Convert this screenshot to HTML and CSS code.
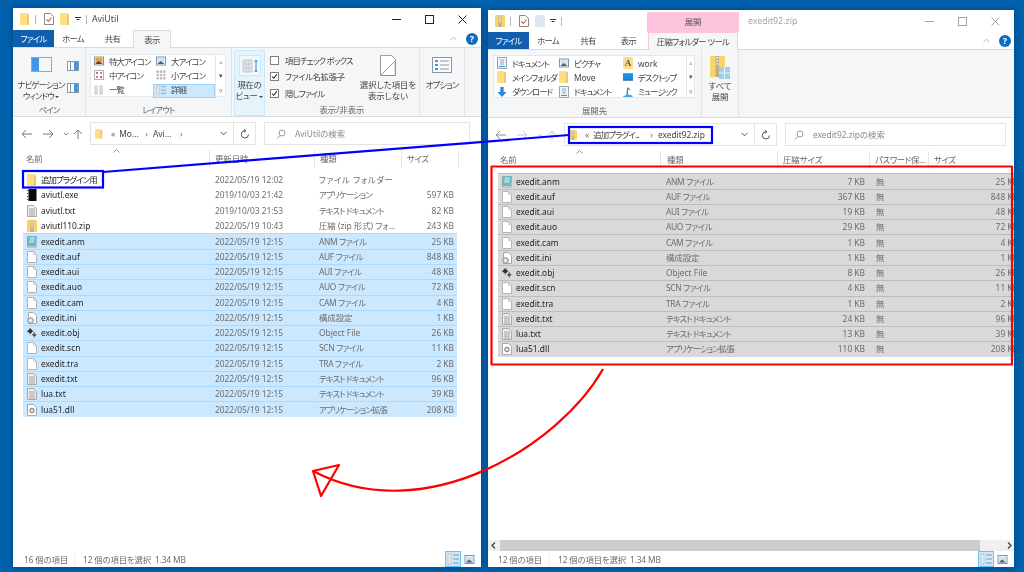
FILE: index.html
```html
<!DOCTYPE html>
<html lang="ja">
<head>
  <meta charset="utf-8">
  <title>AviUtil / exedit92.zip</title>
  <link rel="stylesheet" href="styles.css">
</head>
<body>

<svg class="Defs" width="0" height="0">
  <symbol id="folder" viewBox="0 0 10 12"><path d="M1 0h6l2 1.5V11a1 1 0 0 1-1 1H1a1 1 0 0 1-1-1V1a1 1 0 0 1 1-1z" fill="#fedd85"/><path d="M7 1v11h1a1 1 0 0 0 1-1V2z" fill="#f0c860"/></symbol>
  <symbol id="zip" viewBox="0 0 10 12"><rect width="10" height="12" rx="1" fill="#fbd36b"/><rect x="3.500" width="3" height="12" fill="#b9b08a"/><path d="M4 1h2M4 3h2M4 5h2M4 7h2" stroke="#fff" stroke-width=".8"/></symbol>
  <symbol id="file" viewBox="0 0 10 12"><path d="M.5.500h6l3 3v8H.5z" fill="#fff" stroke="#b4b4b4"/><path d="M6.500.500v3h3" fill="none" stroke="#ccc"/></symbol>
  <symbol id="txt" viewBox="0 0 10 12"><path d="M.5.500h6l3 3v8H.5z" fill="#efefef" stroke="#a8a8a8"/><path d="M2 4h6M2 6h6M2 8h6M2 10h6" stroke="#a0a0a0"/></symbol>
  <symbol id="exe" viewBox="0 0 10 12"><rect width="10" height="12" fill="#fff"/><rect x="1.500" width="8" height="12" fill="#0a0a0a"/><path d="M.5 1v1M.5 4v1M.5 7v1M.5 10v1" stroke="#555"/></symbol>
  <symbol id="anm" viewBox="0 0 10 12"><path d="M.5.500h8.500v10.500H.5z" fill="#fff" stroke="#999"/><path d="M1.500 0H10L8.500 10H0z" fill="#6fb6c4"/><path d="M3 1h5L7 7H2z" fill="#a5d6de"/></symbol>
  <symbol id="ini" viewBox="0 0 10 12"><path d="M1.500.500h5l3 3v8h-8z" fill="#fff" stroke="#aaa"/><circle cx="3.500" cy="8.500" r="2.800" fill="#ddd" stroke="#888"/><circle cx="3.500" cy="8.500" r="1" fill="#fff"/></symbol>
  <symbol id="obj" viewBox="0 0 11 11"><circle cx="3.500" cy="3.500" r="2.300" fill="#333"/><path d="M3.500 0v7M0 3.500h7" stroke="#333"/><circle cx="8" cy="7.500" r="1.700" fill="#555"/><path d="M8 4.500v6M5.500 7.500h5" stroke="#555"/></symbol>
  <symbol id="dll" viewBox="0 0 10 12"><path d="M.5.500h6l3 3v8H.5z" fill="#fff" stroke="#aaa"/><circle cx="5" cy="6.500" r="2.300" fill="#ccc" stroke="#7f7f7f"/><circle cx="5" cy="6.500" r=".8" fill="#fff"/></symbol>
  <symbol id="doc" viewBox="0 0 10 12"><path d="M.5.500h9v11h-9z" fill="#f3f3f3" stroke="#9aa3ad"/><path d="M3 2h4v6H3z" fill="#b9d3ea"/><path d="M2 9.500h6" stroke="#3f8fd6"/></symbol>
  <symbol id="props" viewBox="0 0 10 12"><path d="M.5.500h6l3 3v8h-9z" fill="#fff" stroke="#8a8a8a"/><path d="M2.500 6.500l2 2 3-4" fill="none" stroke="#e0533a" stroke-width="1.100"/></symbol>
  <symbol id="pict" viewBox="0 0 10 9"><rect x=".5" y=".5" width="9" height="8" fill="#fff" stroke="#8793a0"/><rect x="1.500" y="1.500" width="7" height="6" fill="#cfe3f4"/><path d="M1.500 7.500l3-3 4 3z" fill="#44617c"/></symbol>
  <symbol id="pictx" viewBox="0 0 10 9"><rect x=".5" y=".5" width="9" height="8" fill="#fff" stroke="#8793a0"/><rect x="1.500" y="1.500" width="7" height="6" fill="#e7a03c"/><path d="M1.500 7.500l3-3 4 3z" fill="#4a3f87"/></symbol>
  <symbol id="mid" viewBox="0 0 10 10"><rect x=".5" y=".5" width="9" height="9" fill="#fff" stroke="#b3b3b3"/><path d="M2 2h2v2H2z" fill="#e0654a"/><path d="M6 2h2v2H6z" fill="#999"/><path d="M2 6h2v2H2z" fill="#999"/><path d="M6 6h2v2H6z" fill="#e0654a"/></symbol>
  <symbol id="small" viewBox="0 0 12 12"><path d="M1 1h2v2H1zM5 1h2v2H5zM9 1h2v2H9zM1 5h2v2H1zM5 5h2v2H5zM9 5h2v2H9zM1 9h2v2H1zM5 9h2v2H5zM9 9h2v2H9z" fill="#e3a89d" stroke="#aaa" stroke-width=".6"/></symbol>
  <symbol id="lst" viewBox="0 0 12 12"><path d="M1 1h3v3H1zM1 5h3v3H1zM1 9h3v2H1z" fill="#eee" stroke="#b5b5b5" stroke-width=".7"/><path d="M7 1h3v3H7zM7 5h3v3H7zM7 9h3v2H7z" fill="#eee" stroke="#b5b5b5" stroke-width=".7"/></symbol>
  <symbol id="details" viewBox="0 0 12 12"><path d="M1 1h3v10H1z" fill="#eee" stroke="#b5b5b5" stroke-width=".7"/><path d="M6 2h6M6 6h6M6 10h6" stroke="#8a99a6"/></symbol>
  <symbol id="pane" viewBox="0 0 12 10"><rect x=".5" y=".5" width="11" height="9" fill="#fff" stroke="#8a97a3"/><rect x="7" y="1" width="4" height="8" fill="#3f97e6"/><path d="M3.500 1v8" stroke="#8a97a3"/></symbol>
  <symbol id="arrowdown" viewBox="0 0 12 12"><path d="M4 0h4v6h3.500L6 12 .5 6H4z" fill="#2f86d6"/></symbol>
  <symbol id="desk" viewBox="0 0 12 9"><rect width="12" height="7" fill="#1a8fe3"/><rect y="7" width="12" height="2" fill="#2a6aa8"/></symbol>
  <symbol id="note" viewBox="0 0 12 12"><path d="M5 0l4 3-1 1-2-1v7c0 1.500-2.500 2-4 2h-2c1-1 2-2 4-2z" fill="#2f8fdc"/><path d="M7 9c2 0 4 1 5 3H3z" fill="#4aa8e8"/></symbol>
  <symbol id="chk" viewBox="0 0 9 9"><path d="M1.500 4.500l2 2.200 4-5" fill="none" stroke="#222" stroke-width="1.300"/></symbol>
</svg>

<main class="Desktop">

  <!-- 左のウィンドウ -->
  <section class="Win WinLeft">
    <header class="TitleBar">
      <svg class="Qa"><use href="#folder"/></svg>
      <i class="QaSep"></i>
      <svg class="Qa QaProps"><use href="#props"/></svg>
      <svg class="Qa QaNext"><use href="#folder"/></svg>
      <i class="QaDrop"></i>
      <i class="QaSep"></i>
      <span class="Title">AviUtil</span>
      <div class="WinCtrl">
        <svg viewBox="0 0 9 9"><path d="M0 4.500h9"/></svg>
        <svg viewBox="0 0 9 9"><rect x=".5" y=".5" width="8" height="8"/></svg>
        <svg viewBox="0 0 9 9"><path d="M.5.500l8 8M8.500.500l-8 8"/></svg>
      </div>
    </header>

    <nav class="Tabs">
      <span class="Tab TabFile">ファイル</span>
      <span class="Tab T38">ホーム</span>
      <span class="Tab T41">共有</span>
      <span class="Tab T38 TabOn">表示</span>
      <span class="RibbonEnd"><svg class="Chev" viewBox="0 0 8 5"><path d="M.5 4.500L4 1l3.500 3.500"/></svg><b class="Help">?</b></span>
    </nav>

    <div class="Ribbon">
      <div class="Group GPane">
        <div class="GroupBody">
          <div class="Big BigNav">
            <svg class="IconNav" viewBox="0 0 21 15"><rect x=".5" y=".5" width="20" height="14" fill="#f4f6f8" stroke="#9aa7b3"/><rect x="1" y="1" width="7" height="13" fill="#3f97e6"/></svg>
            <span>ナビゲーション<br>ウィンドウ <em class="Drop"></em></span>
          </div>
          <div class="PaneSmall">
            <svg><use href="#pane"/></svg>
            <svg><use href="#pane"/></svg>
          </div>
        </div>
        <div class="GroupLabel Kana">ペイン</div>
      </div>

      <div class="Group GLayout">
        <div class="GroupBody">
          <div class="Gallery GalleryLeft">
            <span class="GItem"><svg><use href="#pictx"/></svg>特大アイコン</span>
            <span class="GItem"><svg><use href="#pict"/></svg>大アイコン</span>
            <span class="GScroll">▴</span>
            <span class="GItem"><svg><use href="#mid"/></svg>中アイコン</span>
            <span class="GItem"><svg><use href="#small"/></svg>小アイコン</span>
            <span class="GScroll GDark">▾</span>
            <span class="GItem"><svg><use href="#lst"/></svg>一覧</span>
            <span class="GItem GItemOn"><svg><use href="#details"/></svg>詳細</span>
            <span class="GScroll GDark">▿</span>
          </div>
        </div>
        <div class="GroupLabel Kana">レイアウト</div>
      </div>

      <div class="Group GView">
        <div class="CurView">
          <span class="CurViewBtn"><svg viewBox="0 0 16 14" width="16" height="14"><path d="M1 1h9v12H1z" fill="#e4e8ec" stroke="#c3c9cf"/><path d="M4 1v12M7 1v12M1 5h9M1 9h9" stroke="#c3c9cf"/><path d="M14 1v12M12.500 2.500L14 1l1.500 1.500M12.500 11.500L14 13l1.500-1.500" fill="none" stroke="#2f86d6"/></svg></span>
          <span>現在の<br>ビュー <em class="Drop"></em></span>
        </div>
        <div class="ViewRest">
          <div class="GroupBody">
            <div class="Checks">
              <label class="Check Kana"><i class="Box"></i>項目チェック ボックス</label>
              <label class="Check KanaMix"><i class="Box"><svg><use href="#chk"/></svg></i>ファイル名拡張子</label>
              <label class="Check Kana"><i class="Box"><svg><use href="#chk"/></svg></i>隠しファイル</label>
            </div>
            <div class="Big BigHide">
              <svg class="IconHide" viewBox="0 0 16 21"><path d="M.5.500h11l4 4v16H.5z" fill="#fff" stroke="#9c9c9c"/><path d="M1 20L15 6" stroke="#9c9c9c"/><path d="M15 6v14.500H2" fill="none" stroke="#3f97e6" stroke-dasharray="1 1"/></svg>
              <span>選択した項目を<br>表示しない</span>
            </div>
          </div>
          <div class="GroupLabel">表示/非表示</div>
        </div>
      </div>

      <div class="Group GOption">
        <div class="GroupBody">
          <div class="Big BigOpt">
            <svg class="IconOpt" viewBox="0 0 20 16"><rect x=".5" y=".5" width="19" height="15" fill="#fbfbfb" stroke="#8a97a3"/><path d="M8 4h9M8 8h9M8 12h9" stroke="#8a97a3"/><path d="M3 4h3M3 8h3M3 12h3" stroke="#3f97e6" stroke-width="2"/></svg>
            <span class="Kana">オプション</span>
          </div>
        </div>
      </div>
    </div>

    <div class="AddrRow">
      <svg class="NavIcons" width="62" height="12" viewBox="0 0 62 12"><path d="M2 6h10M6 2L2 6l4 4M23 6h10M29 2l4 4-4 4M44 5l2 2 2-2M58 11V2M54 6l4-4 4 4" fill="none" stroke="#7d7d7d"/></svg>
      <div class="Addr">
        <svg class="AddrIcon"><use href="#folder"/></svg>
        <span class="Crumb CrumbFirst">«</span>
        <span class="Crumb CrumbName L1">Mo...</span>
        <span class="Crumb">›</span>
        <span class="Crumb CrumbName L2">Avi...</span>
        <span class="Crumb">›</span>
        <svg class="AddrChev" viewBox="0 0 8 5"><path d="M.5.500L4 4l3.500-3.500"/></svg>
        <span class="AddrReload"><svg viewBox="0 0 10 10" width="10" height="10"><path d="M8.500 5.500A3.600 3.600 0 1 1 5 1.800" fill="none" stroke="#555"/><path d="M4 .3l2 1.500L4 3.300" fill="none" stroke="#555"/></svg></span>
      </div>
      <div class="Search">
        <svg viewBox="0 0 10 10" width="10" height="10"><circle cx="6" cy="4" r="3" fill="none" stroke="#999"/><path d="M4 6.500L1 9.500" stroke="#999"/></svg>
        <span>AviUtilの検索</span>
      </div>
    </div>

    <div class="Head HeadLeft">
      <span class="HCell">名前</span>
      <span class="HCell">更新日時</span>
      <span class="HCell">種類</span>
      <span class="HCell KanaMix">サイズ</span>
      <svg class="Sort" viewBox="0 0 7 4"><path d="M.5 3.500L3.500.5l3 3"/></svg>
    </div>

    <div class="List ListLeft">
      <div class="Row"><span class="Name"><svg><use href="#folder"/></svg><span class="Kana">追加プラグイン用</span></span><span>2022/05/19 12:02</span><span class="KanaWide">ファイル フォルダー</span><span class="Size"></span></div>
      <div class="Row"><span class="Name"><svg><use href="#exe"/></svg>aviutl.exe</span><span>2019/10/03 21:42</span><span class="Kana">アプリケーション</span><span class="Size">597 KB</span></div>
      <div class="Row"><span class="Name"><svg><use href="#txt"/></svg>aviutl.txt</span><span>2019/10/03 21:53</span><span class="Kana">テキスト ドキュメント</span><span class="Size">82 KB</span></div>
      <div class="Row"><span class="Name"><svg><use href="#zip"/></svg>aviutl110.zip</span><span>2022/05/19 10:43</span><span>圧縮 (zip 形式) フォ...</span><span class="Size">243 KB</span></div>
      <div class="Row RowSel"><span class="Name"><svg><use href="#anm"/></svg>exedit.anm</span><span>2022/05/19 12:15</span><span class="KanaMix">ANM ファイル</span><span class="Size">25 KB</span></div>
      <div class="Row RowSel"><span class="Name"><svg><use href="#file"/></svg>exedit.auf</span><span>2022/05/19 12:15</span><span class="KanaMix">AUF ファイル</span><span class="Size">848 KB</span></div>
      <div class="Row RowSel"><span class="Name"><svg><use href="#file"/></svg>exedit.aui</span><span>2022/05/19 12:15</span><span class="KanaMix">AUI ファイル</span><span class="Size">48 KB</span></div>
      <div class="Row RowSel"><span class="Name"><svg><use href="#file"/></svg>exedit.auo</span><span>2022/05/19 12:15</span><span class="KanaMix">AUO ファイル</span><span class="Size">72 KB</span></div>
      <div class="Row RowSel"><span class="Name"><svg><use href="#file"/></svg>exedit.cam</span><span>2022/05/19 12:15</span><span class="KanaMix">CAM ファイル</span><span class="Size">4 KB</span></div>
      <div class="Row RowSel"><span class="Name"><svg><use href="#ini"/></svg>exedit.ini</span><span>2022/05/19 12:15</span><span>構成設定</span><span class="Size">1 KB</span></div>
      <div class="Row RowSel"><span class="Name"><svg><use href="#obj"/></svg>exedit.obj</span><span>2022/05/19 12:15</span><span>Object File</span><span class="Size">26 KB</span></div>
      <div class="Row RowSel"><span class="Name"><svg><use href="#file"/></svg>exedit.scn</span><span>2022/05/19 12:15</span><span class="KanaMix">SCN ファイル</span><span class="Size">11 KB</span></div>
      <div class="Row RowSel"><span class="Name"><svg><use href="#file"/></svg>exedit.tra</span><span>2022/05/19 12:15</span><span class="KanaMix">TRA ファイル</span><span class="Size">2 KB</span></div>
      <div class="Row RowSel"><span class="Name"><svg><use href="#txt"/></svg>exedit.txt</span><span>2022/05/19 12:15</span><span class="Kana">テキスト ドキュメント</span><span class="Size">96 KB</span></div>
      <div class="Row RowSel"><span class="Name"><svg><use href="#txt"/></svg>lua.txt</span><span>2022/05/19 12:15</span><span class="Kana">テキスト ドキュメント</span><span class="Size">39 KB</span></div>
      <div class="Row RowSel"><span class="Name"><svg><use href="#dll"/></svg>lua51.dll</span><span>2022/05/19 12:15</span><span class="Kana">アプリケーション拡張</span><span class="Size">208 KB</span></div>
    </div>

    <footer class="Status">
      <span class="StatusCount">16 個の項目</span>
      <span class="StatusSel">12 個の項目を選択&nbsp; 1.34 MB</span>
      <span class="ViewBtns">
        <span class="ViewBtn ViewBtnOn"><svg><use href="#details"/></svg></span>
        <svg class="ViewThumb"><use href="#pict"/></svg>
      </span>
    </footer>
  </section>

  <!-- 右のウィンドウ -->
  <section class="Win WinRight">
    <header class="TitleBar">
      <svg class="Qa"><use href="#zip"/></svg>
      <i class="QaSep"></i>
      <svg class="Qa QaProps"><use href="#props"/></svg>
      <i class="QaBlank Qa QaNext"></i>
      <i class="QaDrop"></i>
      <i class="QaSep"></i>
      <span class="CtxTab">展開</span>
      <span class="Title TitleOff">exedit92.zip</span>
      <div class="WinCtrl WinCtrlOff">
        <svg viewBox="0 0 9 9"><path d="M0 4.500h9"/></svg>
        <svg viewBox="0 0 9 9"><rect x=".5" y=".5" width="8" height="8"/></svg>
        <svg viewBox="0 0 9 9"><path d="M.5.500l8 8M8.500.500l-8 8"/></svg>
      </div>
    </header>

    <nav class="Tabs TabsPink">
      <span class="Tab TabFile">ファイル</span>
      <span class="Tab T38">ホーム</span>
      <span class="Tab T42">共有</span>
      <span class="Tab T39">表示</span>
      <span class="Tab T90 TabCtx">圧縮フォルダー ツール</span>
      <span class="RibbonEnd"><svg class="Chev" viewBox="0 0 8 5"><path d="M.5 4.500L4 1l3.500 3.500"/></svg><b class="Help">?</b></span>
    </nav>

    <div class="Ribbon RibbonRight">
      <div class="Group GDest">
        <div class="GroupBody">
          <div class="Gallery GalleryRight">
            <span class="GItem"><svg><use href="#doc"/></svg>ドキュメント</span>
            <span class="GItem"><svg><use href="#pict"/></svg>ピクチャ</span>
            <span class="GItem GLatin"><i class="WorkIcon">A</i>work</span>
            <span class="GScroll">▴</span>
            <span class="GItem"><svg><use href="#folder"/></svg>メインフォルダ</span>
            <span class="GItem GLatin"><svg><use href="#folder"/></svg>Move</span>
            <span class="GItem"><svg><use href="#desk"/></svg>デスクトップ</span>
            <span class="GScroll GDark">▾</span>
            <span class="GItem"><svg><use href="#arrowdown"/></svg>ダウンロード</span>
            <span class="GItem"><svg><use href="#doc"/></svg>ドキュメント</span>
            <span class="GItem"><svg><use href="#note"/></svg>ミュージック</span>
            <span class="GScroll GDark">▿</span>
          </div>
        </div>
        <div class="GroupLabel">展開先</div>
      </div>
      <div class="Group GExtract">
        <div class="GroupBody">
          <div class="Big BigExtract">
            <svg class="IconExtract" viewBox="0 0 20 23"><rect y="0" width="15" height="21" fill="#fbd36b"/><rect x="5.500" width="3.500" height="21" fill="#b9b08a"/><path d="M6 2h2.500M6 5h2.500M6 8h2.500" stroke="#fff"/><rect x="9" y="11" width="11" height="12" fill="#9fd0ea"/><path d="M14.500 11v12M9 17h11" stroke="#e6f4fb"/></svg>
            <span>すべて<br>展開</span>
          </div>
        </div>
      </div>
    </div>

    <div class="AddrRow AddrRowRight">
      <svg class="NavIcons" width="62" height="12" viewBox="0 0 62 12"><path d="M2 6h10M6 2L2 6l4 4" fill="none" stroke="#8f8f8f"/><path d="M23 6h10M29 2l4 4-4 4M44 5l2 2 2-2M58 11V2M54 6l4-4 4 4" fill="none" stroke="#c9c9c9"/></svg>
      <div class="Addr">
        <svg class="AddrIcon"><use href="#zip"/></svg>
        <span class="Crumb CrumbFirst">«</span>
        <span class="Crumb CrumbName R1 Kana">追加プラグイ...</span>
        <span class="Crumb">›</span>
        <span class="Crumb CrumbName R2">exedit92.zip</span>
        <svg class="AddrChev" viewBox="0 0 8 5"><path d="M.5.500L4 4l3.500-3.500"/></svg>
        <span class="AddrReload"><svg viewBox="0 0 10 10" width="10" height="10"><path d="M8.500 5.500A3.600 3.600 0 1 1 5 1.800" fill="none" stroke="#555"/><path d="M4 .3l2 1.500L4 3.300" fill="none" stroke="#555"/></svg></span>
      </div>
      <div class="Search">
        <svg viewBox="0 0 10 10" width="10" height="10"><circle cx="6" cy="4" r="3" fill="none" stroke="#999"/><path d="M4 6.500L1 9.500" stroke="#999"/></svg>
        <span>exedit92.zipの検索</span>
      </div>
    </div>

    <div class="Head HeadRight">
      <span class="HCell">名前</span>
      <span class="HCell">種類</span>
      <span class="HCell">圧縮サイズ</span>
      <span class="HCell KanaMix">パスワード保...</span>
      <span class="HCell KanaMix">サイズ</span>
      <svg class="Sort" viewBox="0 0 7 4"><path d="M.5 3.500L3.500.5l3 3"/></svg>
    </div>

    <div class="List ListRight">
      <div class="Row RowGrey"><span class="Name"><svg><use href="#anm"/></svg>exedit.anm</span><span class="KanaMix">ANM ファイル</span><span class="Size">7 KB</span><span class="Pw">無</span><span class="Size">25 KB</span></div>
      <div class="Row RowGrey"><span class="Name"><svg><use href="#file"/></svg>exedit.auf</span><span class="KanaMix">AUF ファイル</span><span class="Size">367 KB</span><span class="Pw">無</span><span class="Size">848 KB</span></div>
      <div class="Row RowGrey"><span class="Name"><svg><use href="#file"/></svg>exedit.aui</span><span class="KanaMix">AUI ファイル</span><span class="Size">19 KB</span><span class="Pw">無</span><span class="Size">48 KB</span></div>
      <div class="Row RowGrey"><span class="Name"><svg><use href="#file"/></svg>exedit.auo</span><span class="KanaMix">AUO ファイル</span><span class="Size">29 KB</span><span class="Pw">無</span><span class="Size">72 KB</span></div>
      <div class="Row RowGrey"><span class="Name"><svg><use href="#file"/></svg>exedit.cam</span><span class="KanaMix">CAM ファイル</span><span class="Size">1 KB</span><span class="Pw">無</span><span class="Size">4 KB</span></div>
      <div class="Row RowGrey"><span class="Name"><svg><use href="#ini"/></svg>exedit.ini</span><span>構成設定</span><span class="Size">1 KB</span><span class="Pw">無</span><span class="Size">1 KB</span></div>
      <div class="Row RowGrey"><span class="Name"><svg><use href="#obj"/></svg>exedit.obj</span><span>Object File</span><span class="Size">8 KB</span><span class="Pw">無</span><span class="Size">26 KB</span></div>
      <div class="Row RowGrey"><span class="Name"><svg><use href="#file"/></svg>exedit.scn</span><span class="KanaMix">SCN ファイル</span><span class="Size">4 KB</span><span class="Pw">無</span><span class="Size">11 KB</span></div>
      <div class="Row RowGrey"><span class="Name"><svg><use href="#file"/></svg>exedit.tra</span><span class="KanaMix">TRA ファイル</span><span class="Size">1 KB</span><span class="Pw">無</span><span class="Size">2 KB</span></div>
      <div class="Row RowGrey"><span class="Name"><svg><use href="#txt"/></svg>exedit.txt</span><span class="Kana">テキスト ドキュメント</span><span class="Size">24 KB</span><span class="Pw">無</span><span class="Size">96 KB</span></div>
      <div class="Row RowGrey"><span class="Name"><svg><use href="#txt"/></svg>lua.txt</span><span class="Kana">テキスト ドキュメント</span><span class="Size">13 KB</span><span class="Pw">無</span><span class="Size">39 KB</span></div>
      <div class="Row RowGrey"><span class="Name"><svg><use href="#dll"/></svg>lua51.dll</span><span class="Kana">アプリケーション拡張</span><span class="Size">110 KB</span><span class="Pw">無</span><span class="Size">208 KB</span></div>
    </div>

    <div class="HScroll">
      <svg viewBox="0 0 5 7" width="5" height="7"><path d="M4 .5L1 3.500 4 6.500"/></svg>
      <i class="HThumb"></i>
      <svg viewBox="0 0 5 7" width="5" height="7"><path d="M1 .5L4 3.500 1 6.500"/></svg>
    </div>

    <footer class="Status StatusRight">
      <span class="StatusCount">12 個の項目</span>
      <span class="StatusSel">12 個の項目を選択&nbsp; 1.34 MB</span>
      <span class="ViewBtns">
        <span class="ViewBtn ViewBtnOn"><svg><use href="#details"/></svg></span>
        <svg class="ViewThumb"><use href="#pict"/></svg>
      </span>
    </footer>
  </section>

  <!-- 注釈 -->
  <svg class="Notes" viewBox="0 0 1024 572">
    <g fill="none" stroke="#0000ff" stroke-width="2.200">
      <rect x="23" y="171" width="80" height="16.500"/>
      <rect x="569" y="127" width="143" height="16"/>
      <path d="M103 172L569 135"/>
    </g>
    <g fill="none" stroke="#ff0000" stroke-width="2.200" stroke-linejoin="round">
      <rect x="491.500" y="166.500" width="520.500" height="198"/>
      <path d="M603 369C560 445 425 530 313 471"/>
      <path d="M313 471L339 465L321 496Z"/>
    </g>
  </svg>

</main>
</body>
</html>
```

FILE: styles.css
```css
* {
  box-sizing: border-box;
}
html,
body {
  margin: 0;
  height: 100%;
}
body {
  overflow: hidden;
  background: #0061ad;
  color: #555;
  font: 8.4px/11px "Noto Sans", "Noto Sans CJK JP", sans-serif;
  font-feature-settings: "palt";
}
.Defs {
  position: absolute;
}
.Desktop {
  position: relative;
  width: 1024px;
  height: 572px;
  filter: blur(0.4px);
}
.Win {
  position: absolute;
  display: flex;
  flex-direction: column;
  overflow: hidden;
  background: #fff;
  box-shadow: 0 0 6px rgba(0, 30, 70, 0.45);
}
.WinLeft {
  left: 13px;
  top: 8px;
  width: 468px;
  height: 559px;
}
.WinRight {
  left: 488px;
  top: 10px;
  width: 526px;
  height: 557px;
}
.Notes {
  position: absolute;
  left: 0;
  top: 0;
  width: 1024px;
  height: 572px;
  pointer-events: none;
}

/* かなの字詰め */
.Kana {
  letter-spacing: -0.85px;
}
.KanaMix {
  letter-spacing: -0.35px;
}
.KanaWide {
  letter-spacing: 0.6px;
}

/* タイトルバー */
.TitleBar {
  display: flex;
  flex: none;
  align-items: center;
  height: 22px;
  padding-left: 7px;
}
.Qa {
  display: block;
  flex: none;
  width: 10px;
  height: 12px;
}
.QaSep {
  flex: none;
  width: 1px;
  height: 9px;
  margin-left: 5px;
  background: #b5b5b5;
}
.QaProps {
  margin-left: 8px;
}
.QaNext {
  margin-left: 6px;
}
.QaBlank {
  background: #dde6f4;
}
.QaDrop {
  flex: none;
  width: 6px;
  height: 4px;
  margin-left: 5px;
  border-top: 1px solid #333;
  background: linear-gradient(#333, #333) center / 4px 1px no-repeat;
  clip-path: polygon(0 0, 100% 0, 100% 25%, 50% 100%, 0 25%);
}
.Title {
  margin-left: 5px;
  color: #444;
  font-size: 8.8px;
}
.TitleOff {
  margin-left: 9px;
  color: #a3a3a3;
}
.CtxTab {
  align-self: flex-end;
  width: 92px;
  height: 20px;
  margin-left: 85px;
  background: #ffc4dd;
  color: #555;
  line-height: 20px;
  text-align: center;
}
.WinCtrl {
  display: flex;
  gap: 24px;
  margin-left: auto;
  padding-right: 14px;
}
.WinCtrl svg {
  width: 9px;
  height: 9px;
  fill: none;
  stroke: #222;
}
.WinCtrlOff svg {
  stroke: #a3a3a3;
}

/* タブ */
.Tabs {
  display: flex;
  flex: none;
  align-items: stretch;
  height: 18px;
  border-bottom: 1px solid #dadbdc;
}
.TabsPink {
  border-bottom-color: #ffc4dd;
}
.Tab {
  display: block;
  width: 38px;
  color: #444;
  line-height: 17px;
  text-align: center;
  letter-spacing: -0.7px;
  white-space: nowrap;
}
.T38 { width: 38px; }
.T39 { width: 39px; }
.T41 { width: 41px; }
.T42 { width: 42px; }
.T90 { width: 90px; }
.TabFile {
  width: 41px;
  background: #0f5fae;
  color: #fff;
}
.TabOn {
  height: 18px;
  border: 1px solid #dadbdc;
  border-bottom: 0;
  background: #f5f6f7;
}
.TabCtx {
  height: 18px;
  border: 1px solid #ffc4dd;
  border-bottom: 0;
  background: #f5f6f7;
}
.RibbonEnd {
  display: flex;
  align-items: center;
  gap: 9px;
  margin-left: auto;
  padding-right: 3px;
}
.Chev {
  width: 7px;
  height: 5px;
  fill: none;
  stroke: #aaa;
}
.Help {
  width: 12px;
  height: 12px;
  border-radius: 50%;
  background: #0f6cbd;
  color: #fff;
  font-size: 9px;
  line-height: 12px;
  text-align: center;
}

/* リボン */
.Ribbon {
  display: flex;
  flex: none;
  height: 69px;
  border-bottom: 1px solid #dadbdc;
  background: #f5f6f7;
}
.RibbonRight {
  height: 68px;
}
.Group {
  display: flex;
  flex: none;
  flex-direction: column;
  border-right: 1px solid #e2e3e4;
}
.GPane { width: 73px; }
.GLayout { width: 146px; }
.GView {
  flex-direction: row;
  width: 188px;
}
.GOption { width: 45px; }
.GDest { width: 214px; }
.GExtract { width: 37px; }
.GroupBody {
  display: flex;
  flex: 1;
  min-height: 0;
}
.GroupLabel {
  flex: none;
  height: 13px;
  color: #666;
  line-height: 13px;
  text-align: center;
}
.Big {
  display: flex;
  flex-direction: column;
  align-items: center;
  color: #444;
  text-align: center;
}
.Drop {
  display: inline-block;
  border: 2px solid transparent;
  border-top: 2.500px solid #444;
  border-bottom: 0;
  vertical-align: middle;
}
.BigNav {
  width: 48px;
  margin-left: 4px;
  padding-top: 9px;
  letter-spacing: -0.9px;
  white-space: nowrap;
}
.IconNav {
  width: 21px;
  height: 15px;
  margin-bottom: 7px;
}
.PaneSmall {
  display: flex;
  flex-direction: column;
  gap: 12px;
  margin-left: 2px;
  padding-top: 13px;
}
.PaneSmall svg {
  display: block;
  width: 12px;
  height: 10px;
}

/* ギャラリー */
.Gallery {
  display: grid;
  grid-auto-rows: 14.330px;
  height: 43px;
  margin: 6px 0 0 4px;
  border: 1px solid #e6e7e8;
  background: #fff;
}
.GalleryLeft {
  grid-template-columns: 62px 62px 10px;
}
.GalleryLeft .GItem {
  padding-bottom: 2px;
}
.GalleryRight {
  grid-template-columns: 62px 64px 66px 8px;
  margin: 5px 0 0 5px;
}
.GItem {
  display: flex;
  align-items: center;
  gap: 5px;
  padding-left: 3px;
  color: #444;
  letter-spacing: -0.9px;
  white-space: nowrap;
}
.GLatin {
  letter-spacing: 0;
}
.GItem svg {
  flex: none;
  width: 10px;
  height: 10px;
}
.GalleryRight .GItem svg {
  height: 12px;
}
.WorkIcon {
  flex: none;
  width: 10px;
  height: 12px;
  border-radius: 1px;
  background: #fedd85;
  color: #2a5caa;
  font: 700 9px/13px "Liberation Serif", serif;
  text-align: center;
}
.GItemOn {
  outline: 1px solid #99d1ff;
  outline-offset: -1px;
  background: #cce8ff;
}
.GScroll {
  border-left: 1px solid #e6e7e8;
  color: #c3c3c3;
  font-size: 7px;
  line-height: 14px;
  text-align: center;
}
.GDark {
  color: #555;
}

/* 表示グループ */
.CurView {
  display: flex;
  flex: none;
  flex-direction: column;
  align-items: center;
  width: 31px;
  margin: 2px 0 0 2px;
  border: 1px solid #cce8ff;
  background: #e5f3fb;
  color: #444;
  letter-spacing: -0.3px;
  text-align: center;
  white-space: nowrap;
}
.CurViewBtn {
  display: flex;
  align-items: center;
  justify-content: center;
  width: 22px;
  height: 21px;
  margin: 4px 0 3px;
  border: 1px solid #cce8ff;
  background: #f2f9fd;
}
.ViewRest {
  display: flex;
  flex: 1;
  flex-direction: column;
}
.Checks {
  display: flex;
  flex: none;
  flex-direction: column;
  width: 92px;
  padding: 4px 0 0 5px;
}
.Check {
  display: flex;
  align-items: center;
  gap: 6px;
  height: 16.500px;
  color: #444;
  white-space: nowrap;
}
.Box {
  display: block;
  flex: none;
  width: 9px;
  height: 9px;
  border: 1px solid #7f7f7f;
  background: #fff;
}
.Box svg {
  display: block;
  width: 7px;
  height: 7px;
}
.BigHide {
  flex: 1;
  padding-top: 7px;
  white-space: nowrap;
}
.IconHide {
  width: 16px;
  height: 21px;
  margin-bottom: 3px;
}
.BigOpt {
  flex: 1;
  padding-top: 9px;
}
.IconOpt {
  width: 20px;
  height: 16px;
  margin-bottom: 6px;
}
.BigExtract {
  flex: 1;
  padding-top: 6px;
}
.IconExtract {
  width: 20px;
  height: 23px;
  margin-bottom: 1px;
}

/* アドレスバー */
.AddrRow {
  display: flex;
  flex: none;
  height: 28px;
  padding-top: 5px;
}
.NavIcons {
  flex: none;
  align-self: center;
  margin: 0 8px 0 7px;
}
.AddrRowRight .NavIcons {
  margin: 0 8px 0 6px;
}
.Addr {
  display: flex;
  flex: none;
  align-items: center;
  width: 166px;
  height: 23px;
  border: 1px solid #e3e3e3;
  color: #444;
}
.AddrRowRight .Addr {
  width: 213px;
}
.AddrIcon {
  flex: none;
  width: 8px;
  height: 12px;
  margin-left: 4px;
}
.Crumb {
  flex: none;
  color: #666;
  white-space: nowrap;
}
.CrumbFirst {
  margin: 0 4px 0 8px;
}
.CrumbName {
  color: #444;
}
.L1 { width: 26px; }
.L2 { width: 27px; margin-left: 5px; }
.R1 { width: 57px; }
.R2 { width: 72px; margin-left: 5px; }
.AddrChev {
  flex: none;
  width: 7px;
  height: 5px;
  margin-left: auto;
  fill: none;
  stroke: #444;
}
.AddrReload {
  display: flex;
  flex: none;
  align-items: center;
  justify-content: center;
  width: 22px;
  height: 100%;
  margin-left: 6px;
  border-left: 1px solid #e3e3e3;
}
.Search {
  display: flex;
  flex: none;
  align-items: center;
  gap: 9px;
  width: 206px;
  height: 23px;
  margin-left: 8px;
  padding-left: 11px;
  border: 1px solid #e3e3e3;
  color: #8a8a8a;
}
.AddrRowRight .Search {
  width: 221px;
  margin-left: 8px;
  padding-left: 8px;
}

/* 一覧 */
.Head {
  position: relative;
  display: flex;
  flex: none;
  height: 27.400px;
  padding-top: 5px;
}
.HeadLeft { padding-left: 8px; }
.HeadRight { padding-left: 7px; }
.HCell {
  flex: none;
  height: 18px;
  padding-left: 5px;
  border-right: 1px solid #e5e5e5;
  color: #666;
  line-height: 17px;
  white-space: nowrap;
}
.HeadLeft .HCell:nth-child(1) { width: 189px; }
.HeadLeft .HCell:nth-child(2) { width: 105px; }
.HeadLeft .HCell:nth-child(3) { width: 87px; }
.HeadLeft .HCell:nth-child(4) { width: 57px; }
.HeadRight .HCell:nth-child(1) { width: 166px; }
.HeadRight .HCell:nth-child(2) { width: 117px; padding-left: 6px; }
.HeadRight .HCell:nth-child(3) { width: 92px; }
.HeadRight .HCell:nth-child(4) { width: 59px; }
.HeadRight .HCell:nth-child(5) { width: 85px; border-right: 0; }
.Sort {
  position: absolute;
  top: 4px;
  width: 7px;
  height: 4px;
  fill: none;
  stroke: #999;
}
.HeadLeft .Sort { left: 100px; }
.HeadRight .Sort { left: 88px; }
.List {
  flex: 1;
  min-height: 0;
  padding-left: 10px;
}
.Row {
  display: grid;
  align-items: center;
  height: 15.280px;
  color: #6d6d6d;
  line-height: 14px;
  white-space: nowrap;
}
.ListLeft .Row {
  grid-template-columns: 192px 104px 88px 50px;
  width: 434px;
}
.ListRight .Row {
  grid-template-columns: 168px 114px 85px 65px 88px;
  width: 520px;
}
.Name {
  display: flex;
  align-items: center;
  gap: 4px;
  padding-left: 4px;
  color: #1f1f1f;
}
.Name svg {
  flex: none;
  width: 10px;
  height: 12px;
}
.Size {
  padding-right: 3px;
  text-align: right;
}
.ListRight .Size {
  padding-right: 0;
}
.Pw {
  padding-left: 11px;
}
.RowSel {
  border-top: 1px solid #a9daff;
  background: #cce8ff;
}
.RowGrey {
  border-top: 1px solid #bdbdbd;
  background: #d9d9d9;
}

/* スクロールバーとステータスバー */
.HScroll {
  display: flex;
  flex: none;
  align-items: center;
  gap: 3px;
  height: 11px;
  padding: 0 3px;
  background: #f0f0f0;
}
.HScroll svg {
  flex: none;
  fill: none;
  stroke: #444;
  stroke-width: 1.300;
}
.HThumb {
  flex: 0 0 480px;
  height: 11px;
  margin: 0 24px 0 1px;
  background: #cdcdcd;
}
.Status {
  display: flex;
  flex: none;
  align-items: center;
  height: 16px;
  padding: 0 6px 0 11px;
  color: #6d6d6d;
  letter-spacing: -0.15px;
}
.StatusRight {
  padding-left: 10px;
}
.StatusCount {
  width: 51px;
  border-right: 1px solid #eee;
}
.StatusRight .StatusCount {
  width: 52px;
}
.StatusSel {
  padding-left: 8px;
}
.ViewBtns {
  display: flex;
  align-items: center;
  gap: 3px;
  margin-left: auto;
}
.ViewBtn {
  display: flex;
  align-items: center;
  justify-content: center;
  width: 16px;
  height: 16px;
}
.ViewBtnOn {
  border: 1px solid #66c3f5;
  background: #cce8ff;
}
.ViewBtn svg {
  width: 12px;
  height: 12px;
}
.ViewThumb {
  width: 11px;
  height: 9px;
}
```
